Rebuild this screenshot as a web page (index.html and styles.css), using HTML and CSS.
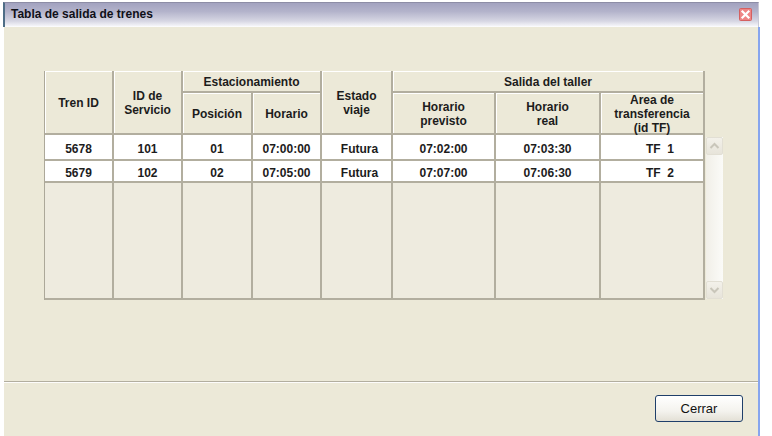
FILE: index.html
```html
<!DOCTYPE html>
<html lang="es">
<head>
<meta charset="utf-8">
<title>Tabla de salida de trenes</title>
<link rel="stylesheet" href="styles.css">
</head>
<body>
<div class="window">
  <div class="titlebar">
    <span class="title">Tabla de salida de trenes</span>
    <span class="close">
      <svg width="13" height="13" viewBox="0 0 13 13"><rect x="0.5" y="0.5" width="12" height="12" rx="1" fill="#ee8585" stroke="#d46060"/><path d="M3.5 3.5 L9.5 9.5 M9.5 3.5 L3.5 9.5" stroke="#fff" stroke-width="2.2" stroke-linecap="square"/></svg>
    </span>
  </div>
  <div class="content">
    <div class="tablearea">
      <div class="grid">
        <div class="th r2">Tren ID</div>
        <div class="th r2">ID de<br>Servicio</div>
        <div class="th c2">Estacionamiento</div>
        <div class="th r2">Estado<br>viaje</div>
        <div class="th c3">Salida del taller</div>
        <div class="th">Posición</div>
        <div class="th">Horario</div>
        <div class="th">Horario<br>previsto</div>
        <div class="th">Horario<br>real</div>
        <div class="th">Area de<br>transferencia<br>(id TF)</div>

        <div class="td">5678</div>
        <div class="td">101</div>
        <div class="td">01</div>
        <div class="td">07:00:00</div>
        <div class="td shift">Futura</div>
        <div class="td">07:02:00</div>
        <div class="td">07:03:30</div>
        <div class="td tf">TF&nbsp;&nbsp;1</div>

        <div class="td">5679</div>
        <div class="td">102</div>
        <div class="td">02</div>
        <div class="td">07:05:00</div>
        <div class="td shift">Futura</div>
        <div class="td">07:07:00</div>
        <div class="td">07:06:30</div>
        <div class="td tf">TF&nbsp;&nbsp;2</div>

        <div class="te"></div><div class="te"></div><div class="te"></div><div class="te"></div>
        <div class="te"></div><div class="te"></div><div class="te"></div><div class="te"></div>
      </div>
      <div class="scrollbar">
        <div class="sbtn">
          <svg width="11" height="8" viewBox="0 0 11 8"><path d="M1.5 6 L5.5 2 L9.5 6" fill="none" stroke="#c9c6ba" stroke-width="2"/></svg>
        </div>
        <div class="strack"></div>
        <div class="sbtn">
          <svg width="11" height="8" viewBox="0 0 11 8"><path d="M1.5 2 L5.5 6 L9.5 2" fill="none" stroke="#c9c6ba" stroke-width="2"/></svg>
        </div>
      </div>
    </div>
    <div class="separator"></div>
    <div class="footer">
      <button class="btn">Cerrar</button>
    </div>
  </div>
</div>
</body>
</html>
```

FILE: styles.css
```css
html, body {
  margin: 0;
  padding: 0;
  background: #ffffff;
}
body {
  font-family: "Liberation Sans", Arial, sans-serif;
  color: #1c1c1c;
}
.window {
  margin: 2px 0 0 3px;
  width: 757px;
}
.titlebar {
  box-sizing: border-box;
  width: 756px;
  height: 25px;
  border-left: 2px solid #4e6d86;
  border-top: 1px solid #8d8da6;
  border-right: 1px solid #c9c9d6;
  background: linear-gradient(to bottom, #a2a2bf 0%, #b3b3cb 35%, #d6d6e3 75%, #f4f4f8 95%, #ffffff 100%);
  display: flex;
  align-items: center;
  justify-content: space-between;
  padding: 0 6px 0 6px;
}
.title {
  font-size: 12px;
  font-weight: bold;
  color: #101018;
  margin-top: -2px;
}
.close {
  display: flex;
  margin-top: -2px;
}
.content {
  margin-left: 1px;
  width: 754px;
  height: 409px;
  background: #ece9d8;
  border-right: 2px solid #87a5ee;
  box-sizing: content-box;
  display: flex;
  flex-direction: column;
}
.tablearea {
  display: flex;
  align-items: flex-start;
  padding: 44px 0 0 40px;
}
.grid {
  display: grid;
  grid-template-columns: 69px 69px 70px 69px 71px 103px 105px 104px;
  grid-template-rows: 22px 42px 26px 22px 117px;
  border-left: 1px solid #aca899;
  font-size: 12px;
  font-weight: bold;
}
.grid > div {
  box-sizing: border-box;
  border-right: 2px solid #b2ae9f;
  border-bottom: 2px solid #b2ae9f;
  display: flex;
  align-items: center;
  justify-content: center;
  text-align: center;
  line-height: 14px;
}
.th {
  background: #ece9d8;
  box-shadow: inset 1px 1px 0 #ffffff;
  padding-top: 1px;
}
.r2 { grid-row: span 2; }
.c2 { grid-column: span 2; }
.c3 { grid-column: span 3; }
.td {
  background: #ffffff;
  font-size: 12px;
  padding-top: 3px;
}
.shift { padding-left: 6px; }
.tf { padding-left: 16px; }
.te {
  background: #eeebdf;
}
.scrollbar {
  margin: 66px 0 0 1px;
  width: 17px;
  height: 162px;
  display: flex;
  flex-direction: column;
  background: linear-gradient(to right, #f1efe8, #fbfbf8);
}
.sbtn {
  box-sizing: border-box;
  height: 18px;
  border: 1px solid #e2dfd4;
  border-radius: 2px;
  background: linear-gradient(to bottom, #f3f1ea, #e7e4da);
  display: flex;
  align-items: center;
  justify-content: center;
}
.strack {
  flex: 1;
}
.separator {
  margin-top: 81px;
  height: 1px;
  border-top: 1px solid #aca899;
  background: #ffffff;
  opacity: 0.9;
}
.footer {
  display: flex;
  justify-content: flex-end;
  padding: 12px 15px 0 0;
}
.btn {
  width: 88px;
  height: 27px;
  border: 1px solid #1f3f6a;
  border-radius: 3px;
  background: linear-gradient(to bottom, #ffffff 0%, #f4f3ee 60%, #e3e0d5 100%);
  font-family: "Liberation Sans", Arial, sans-serif;
  font-size: 13px;
  color: #111;
  padding: 0;
}
```
